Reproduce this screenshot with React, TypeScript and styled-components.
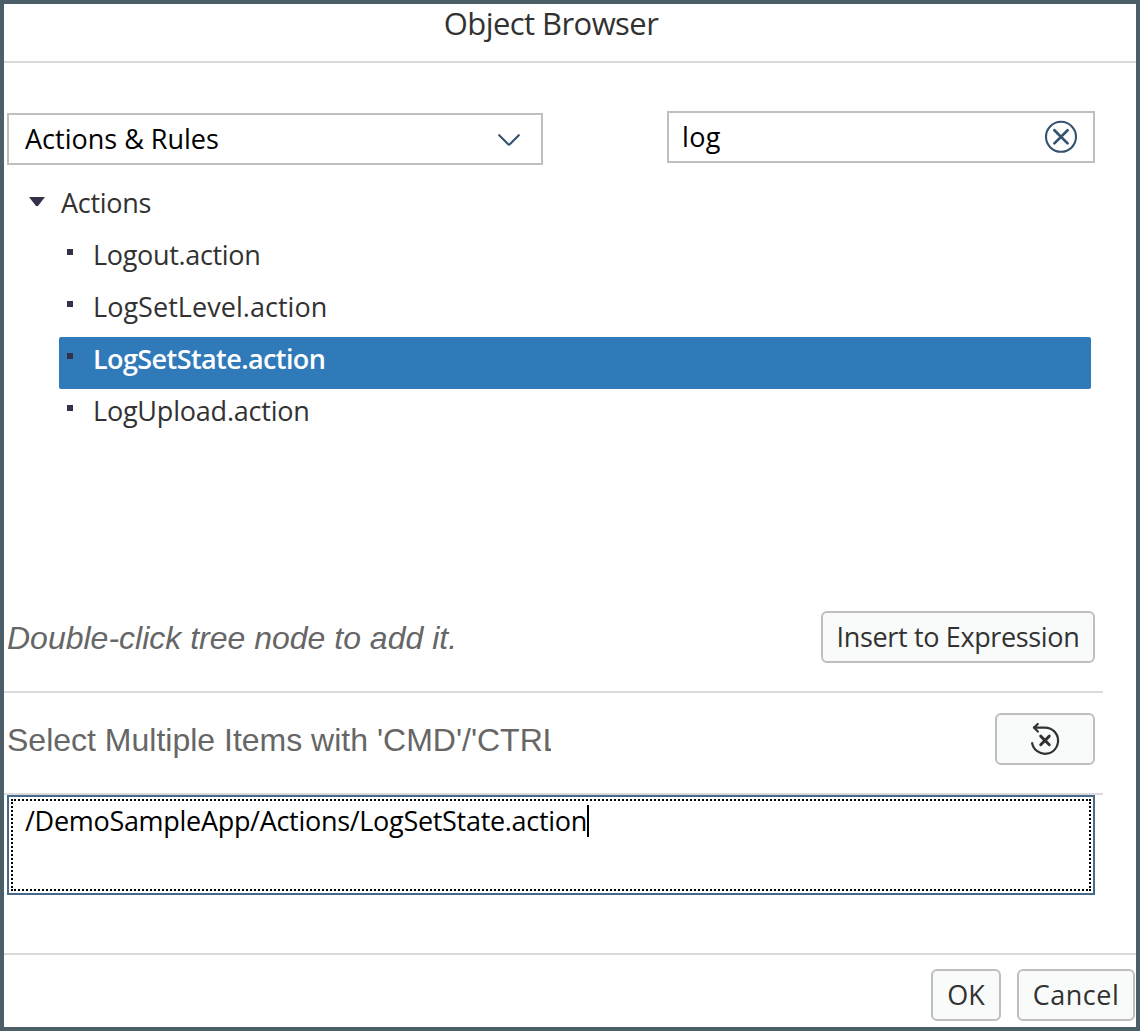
import React from 'react';
import styled, { createGlobalStyle } from 'styled-components';

const GlobalStyle = createGlobalStyle`
  *, *::before, *::after { box-sizing: border-box; }
  body { margin: 0; background: #fff; }
`;

const uiFont = '"Open Sans", "Noto Sans", sans-serif';

const Dialog = styled.main`
  display: flex;
  flex-direction: column;
  width: 1140px;
  height: 1031px;
  overflow: hidden;
  border: 4px solid #4c5e68;
  background: #fff;
  color: #323232;
  font-family: ${uiFont};
  font-size: 27px;
`;

const Header = styled.header`
  height: 59px;
  padding-right: 38px;
  border-bottom: 2px solid #d9d9d9;
`;

const Title = styled.h1`
  margin: 0;
  text-align: center;
  font-size: 31px;
  font-weight: 400;
  line-height: 38px;
  letter-spacing: -0.57px;
`;

const Body = styled.section`
  display: flex;
  flex-direction: column;
  flex: 1;
  width: 1099px;
`;

const Filters = styled.div`
  display: flex;
  align-items: flex-start;
  justify-content: space-between;
  height: 118px;
  padding: 48px 8px 0 3px;
`;

const Field = styled.div<{ $width: number; $padding: string; $offset?: number }>`
  display: flex;
  align-items: center;
  justify-content: space-between;
  width: ${(p) => p.$width}px;
  height: 52px;
  margin-top: ${(p) => p.$offset ?? 0}px;
  padding: ${(p) => p.$padding};
  border: 2px solid #bfbfbf;
  color: #000;
`;

const Label = styled.span<{ $tracking?: number }>`
  line-height: 40px;
  white-space: nowrap;
  letter-spacing: ${(p) => p.$tracking ?? 0}px;
`;

const Icon = styled.svg`
  display: block;
  flex: none;
  fill: none;
  stroke: currentColor;
  stroke-linecap: round;
  stroke-linejoin: round;
`;

const FieldIcon = styled(Icon)`
  color: #35526e;
`;

const Tree = styled.ul`
  height: 430px;
  margin: 0;
  padding: 0 12px 0 23px;
  list-style: none;
`;

const SubTree = styled.ul`
  margin: 0;
  padding: 0 0 0 32px;
  list-style: none;
`;

const Row = styled.div<{ $selected?: boolean; $tracking: number; $gap: number }>`
  display: flex;
  gap: ${(p) => p.$gap}px;
  height: 52px;
  border-radius: 2px;
  line-height: 43px;
  white-space: nowrap;
  letter-spacing: ${(p) => p.$tracking}px;
  background: ${(p) => (p.$selected ? '#317aba' : 'transparent')};
  color: ${(p) => (p.$selected ? '#fff' : '#323232')};
  font-weight: ${(p) => (p.$selected ? 600 : 400)};
`;

const Arrow = styled.span`
  width: 16px;
  height: 9px;
  margin: 16px 0 0 2px;
  background: #32324b;
  clip-path: polygon(0 0, 100% 0, 56% 100%, 44% 100%);
`;

const Bullet = styled.span`
  width: 6px;
  height: 6px;
  margin: 16px 0 0 8px;
  background: #32324b;
`;

const HintRow = styled.div<{ $height: number; $padTop: number }>`
  display: flex;
  align-items: flex-start;
  justify-content: space-between;
  height: ${(p) => p.$height}px;
  padding: ${(p) => p.$padTop}px 8px 0 3px;
  border-bottom: 2px solid #d9d9de;
`;

const Hint = styled.span<{ $italic?: boolean }>`
  width: 544px;
  overflow: hidden;
  color: #666;
  font-family: "Liberation Sans", Arial, sans-serif;
  font-size: 32px;
  font-style: ${(p) => (p.$italic ? 'italic' : 'normal')};
  line-height: 54px;
  white-space: nowrap;
`;

const Button = styled.button<{ $width: number; $tracking?: number }>`
  display: flex;
  align-items: center;
  justify-content: center;
  width: ${(p) => p.$width}px;
  height: 52px;
  padding: 0;
  border: 2px solid #bfbfbf;
  border-radius: 6px;
  background: #f9fbfa;
  color: #323232;
  font: 400 27px/40px ${uiFont};
  letter-spacing: ${(p) => p.$tracking ?? 0}px;
  white-space: nowrap;
`;

const Expression = styled.div`
  display: flex;
  align-items: flex-start;
  height: 100px;
  margin: 0 8px 0 3px;
  padding: 4px 15px 4px 16px;
  border: 2px solid #496b8b;
  outline: 2px dotted #000;
  outline-offset: -6px;
  color: #000;
`;

const Caret = styled.span`
  width: 2px;
  height: 32px;
  margin-top: 4px;
  background: #000;
`;

const Footer = styled.footer`
  display: flex;
  justify-content: flex-end;
  gap: 16px;
  height: 74px;
  padding: 14px 1px 0 0;
  border-top: 2px solid #d9d9d9;
`;

const leaves = [
  { name: 'Logout.action', tracking: -0.33 },
  { name: 'LogSetLevel.action', tracking: 0.04 },
  { name: 'LogSetState.action', tracking: -0.59, selected: true },
  { name: 'LogUpload.action', tracking: -0.21 },
];

export default function App() {
  return (
    <>
      <GlobalStyle />
      <Dialog>
        <Header>
          <Title>Object Browser</Title>
        </Header>
        <Body>
          <Filters>
            <Field $width={536} $padding="0 20px 0 16px" $offset={2}>
              <Label>Actions &amp; Rules</Label>
              <FieldIcon width="24" height="16" viewBox="0 0 24 16" strokeWidth="2.1">
                <path d="M2.2 4.2 L11.2 13.2 Q12 14 12.8 13.2 L21.8 4.2" />
              </FieldIcon>
            </Field>
            <Field $width={428} $padding="0 15px 0 13px">
              <Label $tracking={0.4}>log</Label>
              <FieldIcon width="34" height="34" viewBox="0 0 34 34" strokeWidth="2.1">
                <circle cx="17" cy="16.8" r="15" />
                <path d="M10.4 10.2 L23.6 23.4 M23.6 10.2 L10.4 23.4" strokeWidth="2.7" />
              </FieldIcon>
            </Field>
          </Filters>
          <Tree>
            <li>
              <Row $tracking={-0.3} $gap={16}>
                <Arrow />
                Actions
              </Row>
              <SubTree>
                {leaves.map((leaf) => (
                  <li key={leaf.name}>
                    <Row $selected={leaf.selected} $tracking={leaf.tracking} $gap={20}>
                      <Bullet />
                      {leaf.name}
                    </Row>
                  </li>
                ))}
              </SubTree>
            </li>
          </Tree>
          <HintRow $height={82} $padTop={0}>
            <Hint $italic>Double-click tree node to add it.</Hint>
            <Button $width={274} $tracking={-0.35}>Insert to Expression</Button>
          </HintRow>
          <HintRow $height={102} $padTop={20}>
            <Hint>Select Multiple Items with 'CMD'/'CTRL'</Hint>
            <Button $width={100} aria-label="Reset">
              <Icon width="32" height="34" viewBox="0 0 32 34" strokeWidth="2.2">
                <path d="M3.1 21 A13.1 13.1 0 1 0 16 5.6 H5" />
                <path d="M8.8 2 L5 5.6 L8.8 9.6" />
                <path d="M11.7 14.1 L20.3 22.7 M20.3 14.1 L11.7 22.7" strokeWidth="2.9" />
              </Icon>
            </Button>
          </HintRow>
          <Expression>
            <Label $tracking={-0.3}>/DemoSampleApp/Actions/LogSetState.action</Label>
            <Caret />
          </Expression>
        </Body>
        <Footer>
          <Button $width={70}>OK</Button>
          <Button $width={118} $tracking={0.5}>Cancel</Button>
        </Footer>
      </Dialog>
    </>
  );
}
